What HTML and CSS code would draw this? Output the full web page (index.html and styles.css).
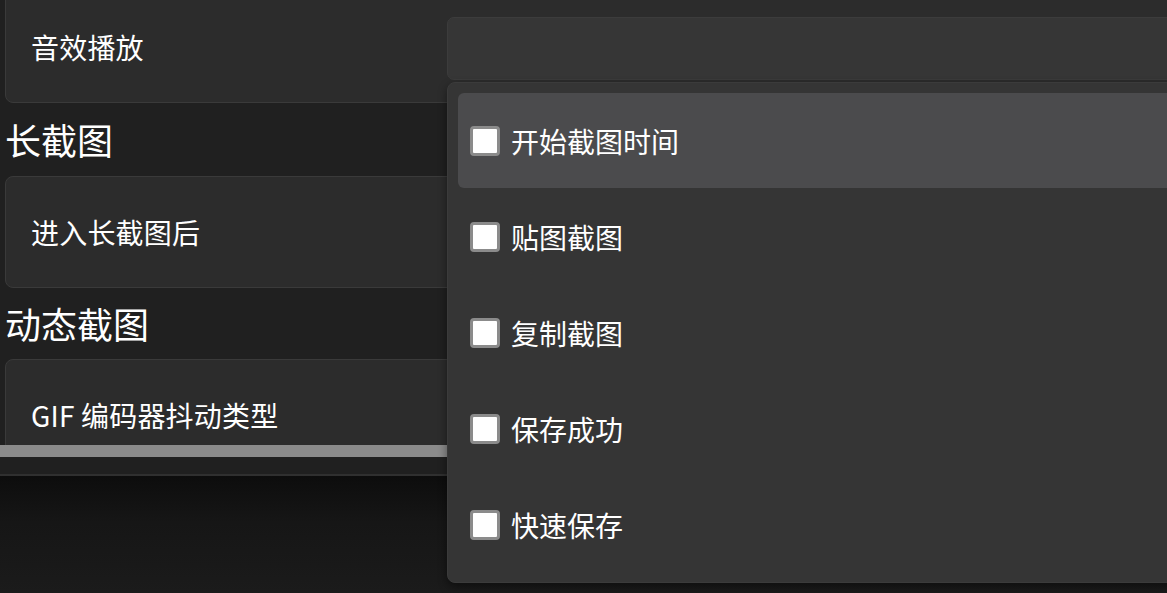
FILE: index.html
```html
<!DOCTYPE html>
<html lang="zh-CN">
<head>
<meta charset="utf-8">
<link rel="stylesheet" href="styles.css">
</head>
<body>
<div class="app">
  <div class="pane">
    <div class="viewport">
      <div class="content">
        <div class="card"><span class="label">音效播放</span></div>
        <h2 class="heading">长截图</h2>
        <div class="card"><span class="label">进入长截图后</span></div>
        <h2 class="heading heading-2">动态截图</h2>
        <div class="card"><span class="label">GIF 编码器抖动类型</span></div>
      </div>
    </div>
    <div class="hscroll"></div>
  </div>
  <div class="footer"></div>

  <div class="combo"></div>
  <div class="popup">
    <div class="item active"><span class="box"></span><span class="text">开始截图时间</span></div>
    <div class="item"><span class="box"></span><span class="text">贴图截图</span></div>
    <div class="item"><span class="box"></span><span class="text">复制截图</span></div>
    <div class="item"><span class="box"></span><span class="text">保存成功</span></div>
    <div class="item"><span class="box"></span><span class="text">快速保存</span></div>
  </div>
</div>
</body>
</html>
```

FILE: styles.css
```css
html, body {
  margin: 0;
  padding: 0;
  height: 100%;
  overflow: hidden;
  background: #202020;
  font-family: "Noto Sans CJK SC", "Noto Sans", sans-serif;
  color: #ffffff;
}

.app {
  position: relative;
  width: 1167px;
  height: 593px;
  display: flex;
  flex-direction: column;
  overflow: hidden;
}

.pane {
  height: 474px;
  flex: none;
  display: flex;
  flex-direction: column;
  background: #202020;
  border-bottom: 2px solid #303030;
}

.viewport {
  height: 445px;
  flex: none;
  overflow: hidden;
}

.content {
  margin-top: -9px;
  padding-left: 5px;
  display: flex;
  flex-direction: column;
}

.card {
  height: 110px;
  flex: none;
  margin-right: -40px;
  background: #2c2c2c;
  border: 1px solid #3a3a3a;
  border-radius: 8px;
  display: flex;
  align-items: center;
  padding-left: 25px;
}

.label {
  font-size: 28px;
  line-height: 1;
  letter-spacing: 0.2px;
}

.heading {
  margin: 0;
  height: 73px;
  line-height: 73px;
  font-size: 36px;
  font-weight: 400;
}

.heading-2 {
  height: 71px;
  line-height: 71px;
}

.hscroll {
  height: 12px;
  flex: none;
  background: #8b8b8b;
}

.footer {
  flex: 1;
  background: linear-gradient(180deg, #0d0d0d 0%, #161616 40%, #1b1b1b 100%);
}

.combo {
  position: absolute;
  left: 447px;
  top: 17px;
  width: 760px;
  height: 61px;
  background: #363636;
  border: 1px solid #3c3c3c;
  border-radius: 7px;
}

.popup {
  position: absolute;
  left: 447px;
  top: 82px;
  width: 760px;
  height: 479px;
  padding: 10px;
  background: #353535;
  border: 1px solid #3b3b3b;
  border-radius: 8px;
  box-shadow: 0 4px 10px rgba(0, 0, 0, 0.45);
  display: flex;
  flex-direction: column;
}

.item {
  height: 96px;
  flex: none;
  display: flex;
  align-items: center;
  padding-left: 12px;
  gap: 11px;
  border-radius: 6px;
}

.item.active {
  height: 95px;
  margin-bottom: 1px;
  background: #4b4b4d;
}

.box {
  width: 24px;
  height: 24px;
  border: 3px solid #8b8b8b;
  border-radius: 4px;
  background: #ffffff;
  flex: none;
}

.text {
  font-size: 28px;
  line-height: 1;
}
```
